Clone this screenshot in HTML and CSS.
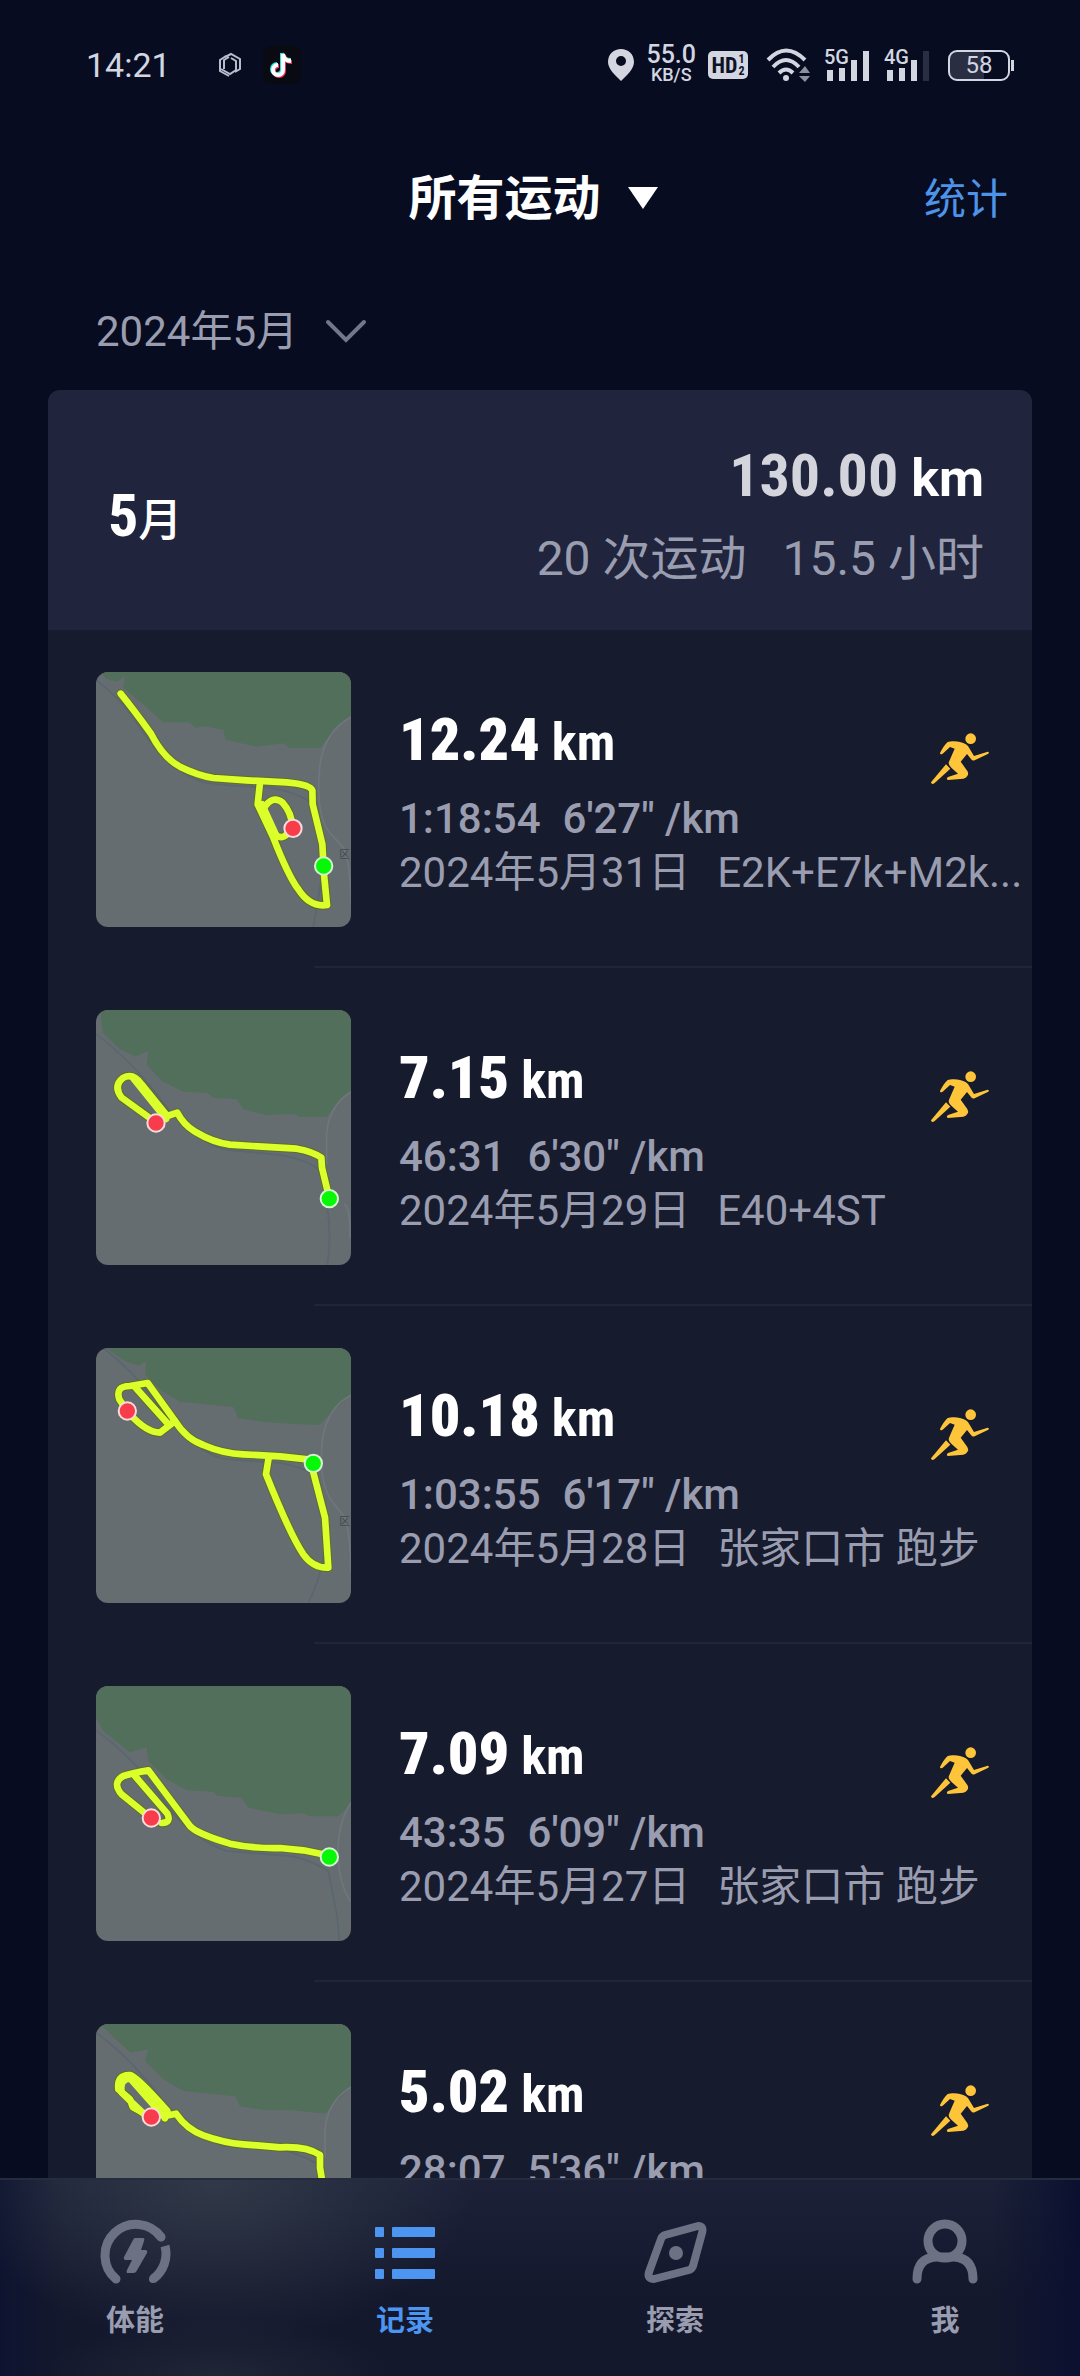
FILE: index.html
```html
<!DOCTYPE html>
<html lang="zh-CN">
<head>
    <meta charset="UTF-8">
    <meta name="viewport" content="width=device-width, initial-scale=1.0">
    <title>运动记录</title>
    <link rel="stylesheet" href="styles.css">
</head>
<body>

<!-- 公用图标 -->
<svg class="defs" width="0" height="0" aria-hidden="true">
    <symbol id="runner" viewBox="30 30 180 156">
        <circle cx="152" cy="47" r="16"/>
        <path d="M60 90 C66 78 74 66 82 58 C92 54 108 54 120 57 C134 60 144 66 148 76 L162 99 L203 86 Q209 87 205 92 L164 112 Q157 114 153 108 L141 93 L122 116 L142 144 Q147 152 142 159 Q138 166 130 167 L84 171 Q77 168 84 162 L114 152 L94 134 Q82 124 88 114 L104 77 L90 72 L68 92 Q60 96 60 90 Z"/>
        <path d="M78 124 L91 137 L44 180 Q35 187 33 178 Z"/>
    </symbol>
</svg>

<!-- 状态栏 -->
<div class="status-bar">
    <span class="clock">14:21</span>
    <svg class="app-hex" width="26" height="26" viewBox="0 0 26 26" fill="none" stroke="#b9bccb" stroke-width="2">
        <path d="M8 5 L14 2 L23 7 V17 L18 20"/>
        <path d="M14 6 L19 9 V18 L13 22 L4 17"/>
        <path d="M12 24 L3 19 V8 L9 4"/>
        <path d="M12 5 L7 8 V17"/>
    </svg>
    <svg class="app-note" width="38" height="38" viewBox="0 0 38 38">
        <rect width="38" height="38" rx="8" fill="#0a0a12"/>
        <path d="M19 7 V23 A5 5 0 1 1 14 18 M19 7 Q20 14 28 14" fill="none" stroke="#25e5df" stroke-width="4"/>
        <path d="M21 9 V25 A5 5 0 1 1 16 20 M21 9 Q22 16 29 16" fill="none" stroke="#f03555" stroke-width="4"/>
        <path d="M20 8 V24 A5 5 0 1 1 15 19 M20 8 Q21 15 28 15" fill="none" stroke="#fff" stroke-width="4"/>
    </svg>

    <div class="status-right">
        <svg width="26" height="34" viewBox="0 0 26 34">
            <path fill="#d3d5e0" fill-rule="evenodd" d="M13 1 C20 1 26 6 26 14 C26 21 19 27 13 33 C7 27 0 21 0 14 C0 6 6 1 13 1 Z M13 8 A5 5 0 1 0 13 18 A5 5 0 1 0 13 8 Z"/>
        </svg>
        <div class="speed"><b>55.0</b><span>KB/S</span></div>
        <div class="hd"><b>HD</b><span><i>1</i><i>2</i></span></div>
        <svg class="wifi" width="46" height="36" viewBox="0 0 46 36">
            <g fill="none" stroke="#d3d5e0" stroke-width="4">
                <path d="M2 13 Q20 -6 39 13"/>
                <path d="M7 20 Q20 6 33 20"/>
                <path d="M13 26 Q20 19 27 26"/>
            </g>
            <circle cx="20" cy="31" r="3" fill="#d3d5e0"/>
            <path d="M33 26 L39 19 L44 26 Z M33 29 L39 35 L44 29 Z" fill="#8d909f"/>
        </svg>
        <svg class="signal" width="48" height="46" viewBox="0 -6 48 46">
            <text x="0" y="16">5G</text>
            <path d="M6 22 V33 M18 20 V33 M30 12 V33 M42 3 V33" stroke="#d3d5e0" stroke-width="6"/>
        </svg>
        <svg class="signal" width="48" height="46" viewBox="0 -6 48 46">
            <text x="0" y="16">4G</text>
            <path d="M6 22 V33 M18 20 V33 M30 12 V33" stroke="#d3d5e0" stroke-width="6"/>
            <path d="M42 3 V33" stroke="#2a2e42" stroke-width="6"/>
        </svg>
        <span class="battery">58</span>
    </div>
</div>

<!-- 标题 -->
<header class="title-bar">
    <label class="picker title-picker">
        <select aria-label="运动类型"><option>所有运动</option></select>
        <svg width="30" height="22" viewBox="0 0 30 22"><path d="M0 0 H30 L15 22 Z" fill="#fff"/></svg>
    </label>
    <a class="stats-link" href="#stats">统计</a>
</header>

<label class="picker month-picker">
    <select aria-label="月份"><option>2024年5月</option></select>
    <svg width="42" height="24" viewBox="0 0 42 24" fill="none" stroke="#73778a" stroke-width="4" stroke-linecap="round">
        <path d="M3 3 L21 21 L39 3"/>
    </svg>
</label>

<main class="card">
    <section class="summary">
        <h2><b>5</b>月</h2>
        <div class="totals">
            <p class="total-distance"><b>130.00</b> km</p>
            <p class="total-count"><span>20 次运动</span><span>15.5 小时</span></p>
        </div>
    </section>

    <ul class="records">
        <li class="record">
            <svg class="map" viewBox="48 63 765 765">
                <path class="forest" d="M60 63 L80 84 L110 92 L135 76 L130 110 L195 165 L250 214 L330 214 L345 230 L375 226 L430 236 L436 266 L530 287 L610 277 L630 291 L720 291 L748 255 L775 222 L813 195 V63 Z"/>
                <path class="road" d="M813 198 Q735 240 720 340 Q705 480 745 540 L790 590 Q812 640 813 760"/>
                <path class="river" d="M48 86 Q130 150 180 230 Q270 370 380 396 Q470 408 560 408 Q660 425 700 460 Q730 560 725 680 L700 828"/>
                <text x="778" y="620" class="place">区</text>
                <g class="route">
                    <path d="M122 128 Q160 175 213 248 Q250 320 300 347 Q350 372 400 381 L500 388 L620 394 Q690 400 697 418 L698 460 L727 580 L732 670 L741 762 Q690 770 655 715 Q625 675 580 560 L533 460 L540 395"/>
                    <path d="M550 475 Q575 430 608 455 Q635 485 638 530 Q610 572 588 552"/>
                </g>
                <g class="route-line">
                    <path d="M122 128 Q160 175 213 248 Q250 320 300 347 Q350 372 400 381 L500 388 L620 394 Q690 400 697 418 L698 460 L727 580 L732 670 L741 762 Q690 770 655 715 Q625 675 580 560 L533 460 L540 395"/>
                    <path d="M550 475 Q575 430 608 455 Q635 485 638 530 Q610 572 588 552"/>
                    <path d="M546 460 L588 552"/>
                </g>
                <circle class="finish" cx="639" cy="532" r="26"/>
                <circle class="start" cx="731" cy="645" r="26"/>
            </svg>
            <div class="info">
                <div class="main-line">
                    <div>
                        <p class="distance"><b>12.24</b> km</p>
                        <p class="pace"><span>1:18:54</span><span>6'27" /km</span></p>
                    </div>
                    <svg class="runner"><use href="#runner"/></svg>
                </div>
                <p class="note"><span>2024年5月31日</span><span class="name">E2K+E7k+M2k...</span></p>
            </div>
        </li>

        <li class="record">
            <svg class="map" viewBox="48 57 765 765">
                <path class="forest" d="M60 57 L68 125 L120 175 L165 196 L205 180 L200 220 L245 270 L310 302 L380 305 L400 320 L470 325 L490 355 L560 372 L640 368 L660 378 L740 378 L770 340 L813 302 V57 Z"/>
                <path class="road" d="M813 302 Q745 345 740 430 V520 M795 640 Q812 660 810 740"/>
                <path class="river" d="M48 130 Q140 195 230 310 Q320 440 430 475 L600 492 Q680 505 725 540 L742 650 Q755 740 742 822"/>
                <g class="route">
                    <path d="M215 385 L125 320 Q98 285 130 260 Q160 245 185 280 L262 375 L292 365 Q310 400 345 422 Q400 455 450 461 L650 473 Q700 482 724 500 L726 530 L745 610"/>
                </g>
                <g class="route-line">
                    <path d="M215 385 L125 320 Q98 285 130 260 Q160 245 185 280 L262 375 L292 365 Q310 400 345 422 Q400 455 450 461 L650 473 Q700 482 724 500 L726 530 L745 610"/>
                    <path d="M160 262 L258 384"/>
                </g>
                <circle class="finish" cx="228" cy="396" r="26"/>
                <circle class="start" cx="748" cy="623" r="26"/>
            </svg>
            <div class="info">
                <div class="main-line">
                    <div>
                        <p class="distance"><b>7.15</b> km</p>
                        <p class="pace"><span>46:31</span><span>6'30" /km</span></p>
                    </div>
                    <svg class="runner"><use href="#runner"/></svg>
                </div>
                <p class="note"><span>2024年5月29日</span><span class="name">E40+4ST</span></p>
            </div>
        </li>

        <li class="record">
            <svg class="map" viewBox="48 51 765 765">
                <path class="forest" d="M80 51 L130 88 L175 104 L200 90 L195 130 L245 180 L300 212 L460 228 L475 262 L560 274 L660 280 L718 282 L750 250 L813 193 V51 Z"/>
                <path class="road" d="M813 193 Q740 230 727 330 Q715 450 755 510 L795 560 Q812 620 812 720"/>
                <path class="river" d="M70 51 Q160 120 230 215 Q320 350 430 384 L600 396 Q680 410 710 440 L735 600 Q740 700 688 810"/>
                <text x="778" y="582" class="place">区</text>
                <g class="route">
                    <path d="M142 240 L118 205 Q105 165 150 165 L203 156 L285 270 Q320 325 370 342 Q430 368 490 370 L600 376 L690 386 L735 560 L745 710 Q700 712 670 670 Q630 610 558 430 L566 380"/>
                    <path d="M150 250 Q200 305 240 305 L285 270 M165 168 L265 280"/>
                </g>
                <g class="route-line">
                    <path d="M142 240 L118 205 Q105 165 150 165 L203 156 L285 270 Q320 325 370 342 Q430 368 490 370 L600 376 L690 386 L735 560 L745 710 Q700 712 670 670 Q630 610 558 430 L566 380"/>
                    <path d="M150 250 Q200 305 240 305 L285 270 M165 168 L265 280"/>
                </g>
                <circle class="finish" cx="142" cy="240" r="26"/>
                <circle class="start" cx="700" cy="397" r="26"/>
            </svg>
            <div class="info">
                <div class="main-line">
                    <div>
                        <p class="distance"><b>10.18</b> km</p>
                        <p class="pace"><span>1:03:55</span><span>6'17" /km</span></p>
                    </div>
                    <svg class="runner"><use href="#runner"/></svg>
                </div>
                <p class="note"><span>2024年5月28日</span><span class="name">张家口市 跑步</span></p>
            </div>
        </li>

        <li class="record">
            <svg class="map" viewBox="48 45 765 765">
                <path class="forest" d="M48 45 V140 L70 180 L150 244 L200 228 L205 270 L260 325 L320 358 L400 362 L410 374 L485 380 L505 410 L600 430 L670 426 L690 436 L775 436 L813 400 V45 Z"/>
                <path class="road" d="M813 395 Q770 460 775 560 Q775 630 810 690"/>
                <path class="river" d="M48 178 Q150 250 230 360 Q320 500 440 540 L640 556 Q710 575 745 600 L772 740 L778 810"/>
                <g class="route">
                    <path d="M205 435 L125 370 Q95 335 130 315 Q160 305 205 298 L330 465 Q350 488 450 518 Q520 533 600 531 L670 538 L740 552"/>
                    <path d="M165 315 L262 428 Q275 455 245 456"/>
                </g>
                <g class="route-line">
                    <path d="M205 435 L125 370 Q95 335 130 315 Q160 305 205 298 L330 465 Q350 488 450 518 Q520 533 600 531 L670 538 L740 552"/>
                    <path d="M165 315 L262 428 Q275 455 245 456"/>
                </g>
                <circle class="finish" cx="214" cy="441" r="26"/>
                <circle class="start" cx="748" cy="558" r="26"/>
            </svg>
            <div class="info">
                <div class="main-line">
                    <div>
                        <p class="distance"><b>7.09</b> km</p>
                        <p class="pace"><span>43:35</span><span>6'09" /km</span></p>
                    </div>
                    <svg class="runner"><use href="#runner"/></svg>
                </div>
                <p class="note"><span>2024年5月27日</span><span class="name">张家口市 跑步</span></p>
            </div>
        </li>

        <li class="record">
            <svg class="map" viewBox="48 69 765 765">
                <path class="forest" d="M60 69 L150 155 L205 145 L195 180 L250 235 L310 270 L465 286 L480 316 L560 328 L640 328 L735 338 L770 300 L813 258 V69 Z"/>
                <path class="road" d="M813 258 Q735 305 735 400 V470"/>
                <path class="river" d="M48 95 Q140 160 230 275 Q320 400 430 434 L620 450 Q690 470 725 500"/>
                <g class="route">
                    <path d="M215 350 L158 318 L150 295 L115 265 Q110 220 150 222 Q170 225 262 330 L255 352 M255 345 L288 338 Q320 385 370 403 Q430 425 490 430 L600 439 Q680 435 720 462 L720 500 L730 560"/>
                </g>
                <g class="route-line">
                    <path d="M215 350 L158 318 L150 295 L115 265 Q110 220 150 222 Q170 225 262 330 L255 352 M255 345 L288 338 Q320 385 370 403 Q430 425 490 430 L600 439 Q680 435 720 462 L720 500 L730 560"/>
                    <path d="M195 342 L125 275 Q118 235 150 232 L250 345"/>
                </g>
                <circle class="finish" cx="214" cy="348" r="26"/>
            </svg>
            <div class="info">
                <div class="main-line">
                    <div>
                        <p class="distance"><b>5.02</b> km</p>
                        <p class="pace"><span>28:07</span><span>5'36" /km</span></p>
                    </div>
                    <svg class="runner"><use href="#runner"/></svg>
                </div>
                <p class="note"></p>
            </div>
        </li>
    </ul>
</main>

<!-- 底部导航 -->
<nav class="tab-bar">
    <a class="tab" href="#fitness">
        <svg width="74" height="68" viewBox="0 0 74 68">
            <g fill="none" stroke="#6d7184" stroke-width="9">
                <path d="M18 61 A31 31 0 1 1 63 19" stroke-linecap="round"/>
                <path d="M55 61 A31 31 0 0 0 67 28"/>
            </g>
            <circle cx="55" cy="61" r="4" fill="#6d7184"/>
            <path fill="#6d7184" d="M37 20 H45 Q47 20 46 23 L43 32 H48 Q50 33 49 35 L38 54 Q37 55 35 55 H29 Q28 54 29 52 L34 42 H27 Q25 41 26 39 L35 22 Q36 20 37 20 Z"/>
        </svg>
        <span>体能</span>
    </a>
    <a class="tab active" href="#records" aria-current="page">
        <svg width="74" height="68" viewBox="0 0 74 68" fill="#4c96f2">
            <rect x="7" y="9" width="9" height="10" rx="1"/><rect x="24" y="9" width="43" height="10" rx="1"/>
            <rect x="7" y="30" width="9" height="10" rx="1"/><rect x="24" y="30" width="43" height="10" rx="1"/>
            <rect x="7" y="51" width="9" height="10" rx="1"/><rect x="24" y="51" width="43" height="10" rx="1"/>
        </svg>
        <span>记录</span>
    </a>
    <a class="tab" href="#explore">
        <svg width="74" height="68" viewBox="0 0 74 68">
            <path d="M23 21 Q24 18 27 17 L60 8 Q66 8 64 15 L55 48 Q54 51 51 52 L16 61 Q9 61 11 54 Z" fill="none" stroke="#6d7184" stroke-width="8" stroke-linejoin="round"/>
            <circle cx="38" cy="35" r="7" fill="#6d7184"/>
        </svg>
        <span>探索</span>
    </a>
    <a class="tab" href="#me">
        <svg width="74" height="68" viewBox="0 0 74 68" fill="none" stroke="#6d7184" stroke-width="9" stroke-linecap="round">
            <ellipse cx="37" cy="23" rx="17" ry="17"/>
            <path d="M9 61 Q9 40 28 39 H46 Q65 40 65 61"/>
        </svg>
        <span>我</span>
    </a>
</nav>

</body>
</html>
```
FILE: styles.css
```css
* {
    box-sizing: border-box;
}

body {
    margin: 0;
    height: 100vh;
    overflow: hidden;
    display: flex;
    flex-direction: column;
    background-color: #070c20;
    color: #fff;
    font-family: Roboto, "Noto Sans CJK SC", sans-serif;
}

h2, p, ul {
    margin: 0;
    padding: 0;
}

a {
    text-decoration: none;
}

.defs {
    position: absolute;
}

/* 状态栏 */
.status-bar {
    flex: none;
    display: flex;
    align-items: center;
    height: 130px;
    padding: 0 70px 0 86px;
    color: #d3d5e0;
}

.clock {
    font-size: 34px;
}

.app-hex {
    margin-left: 46px;
}

.app-note {
    margin-left: 20px;
}

.status-right {
    display: flex;
    align-items: center;
    margin-left: auto;
}

.speed {
    display: flex;
    flex-direction: column;
    align-items: center;
    margin: 0 12px;
    line-height: 20px;
    font-size: 18px;
    font-weight: 500;
}

.speed b {
    font-size: 25px;
    font-weight: 500;
}

.hd {
    display: flex;
    align-items: center;
    justify-content: center;
    gap: 1px;
    width: 40px;
    height: 28px;
    border-radius: 5px;
    background-color: #d3d5e0;
    color: #0d1226;
    font-family: "Roboto Condensed", Roboto, sans-serif;
    font-size: 22px;
}

.hd span {
    display: grid;
    font-size: 12px;
    font-weight: 700;
    line-height: 12px;
}

.hd i {
    font-style: normal;
}

.wifi {
    margin-left: 18px;
}

.signal {
    margin-left: 12px;
}

.signal text {
    fill: #d3d5e0;
    font-size: 20px;
    font-weight: 500;
}

.battery {
    position: relative;
    width: 62px;
    margin-left: 16px;
    border: 2px solid #d3d5e0;
    border-radius: 9px;
    background: linear-gradient(to right, #2a2e42 58%, transparent 58%);
    font-size: 24px;
    line-height: 27px;
    text-align: center;
}

.battery::after {
    content: "";
    position: absolute;
    right: -6px;
    top: 8px;
    width: 3px;
    height: 11px;
    background-color: #d3d5e0;
}

/* 标题栏 */
.title-bar {
    flex: none;
    display: grid;
    grid-template-columns: 1fr auto 1fr;
    align-items: center;
    height: 136px;
    padding: 0 72px 0 58px;
}

.picker {
    display: flex;
    align-items: center;
}

.picker select {
    appearance: none;
    border: none;
    padding: 0;
    background: none;
    color: inherit;
    font: inherit;
}

.title-picker {
    grid-column: 2;
    gap: 26px;
    font-size: 48px;
    font-weight: 700;
}

.stats-link {
    justify-self: end;
    padding-bottom: 6px;
    font-size: 42px;
    color: #4d94e8;
}

.month-picker {
    flex: none;
    height: 124px;
    gap: 26px;
    padding: 6px 96px 0;
    font-size: 42px;
    color: #9a9daf;
}

/* 月份卡片 */
.card {
    flex: 1;
    min-height: 0;
    overflow: hidden;
    margin: 0 48px;
    border-radius: 12px 12px 0 0;
    background-color: #171b2e;
}

.summary {
    display: flex;
    justify-content: space-between;
    align-items: center;
    height: 240px;
    padding: 14px 48px 0 60px;
    background-color: #20253d;
}

.summary h2 {
    font-size: 44px;
    font-weight: 500;
}

.summary h2 b,
.total-distance b,
.distance {
    font-family: "Roboto Condensed", Roboto, sans-serif;
    font-weight: 700;
}

.summary h2 b,
.total-distance b,
.distance b {
    font-size: 60px;
    line-height: 1;
}

.totals {
    text-align: right;
    line-height: 80px;
}

.total-distance {
    padding-top: 4px;
    font-size: 52px;
    font-weight: 700;
}

.total-distance b {
    color: #d4d5dc;
}

.total-count {
    font-size: 48px;
    color: #9a9daf;
}

.total-count span + span {
    margin-left: 36px;
}

/* 运动列表 */
.records {
    list-style: none;
}

.record {
    display: flex;
    align-items: center;
    gap: 48px;
    height: 338px;
    padding: 0 8px 0 48px;
    background: linear-gradient(#21253a, #21253a) 266px 100% / 100% 2px no-repeat;
}

.map {
    flex: none;
    width: 255px;
    height: 255px;
    border-radius: 12px;
    background-color: #656d70;
}

.forest {
    fill: #526f5b;
}

.road,
.river,
.route path,
.route-line path {
    fill: none;
    stroke-linejoin: round;
    stroke-linecap: round;
}

.road {
    stroke: #70767d;
    stroke-width: 5;
}

.river {
    stroke: #5a6670;
    stroke-width: 5;
}

.route path {
    stroke: #5f6e2c;
    stroke-width: 26;
}

.route-line path {
    stroke: #dbff2b;
    stroke-width: 20;
}

.start,
.finish {
    stroke-width: 6;
}

.start {
    fill: #06f806;
    stroke: #d5f5d0;
}

.finish {
    fill: #f93c4b;
    stroke: #f8dcdc;
}

.place {
    font-size: 32px;
    fill: #41484f;
}

.info {
    flex: 1;
    min-width: 0;
    color: #9a9daf;
}

.main-line {
    display: flex;
    justify-content: space-between;
    align-items: center;
}

.distance {
    color: #fff;
    font-size: 52px;
    line-height: 90px;
}

.pace {
    margin-top: 4px;
    font-size: 42px;
    font-weight: 500;
    line-height: 54px;
}

.pace span + span {
    margin-left: 22px;
}

.runner {
    width: 60px;
    height: 52px;
    margin: 0 34px 26px 0;
    fill: #ffc53a;
}

.note {
    display: flex;
    gap: 27px;
    min-height: 54px;
    font-size: 42px;
    line-height: 54px;
    white-space: nowrap;
}

.name {
    overflow: hidden;
    text-overflow: ellipsis;
}

/* 底部导航 */
.tab-bar {
    flex: none;
    display: grid;
    grid-template-columns: repeat(4, 1fr);
    height: 198px;
    border-top: 2px solid #262b40;
    background:
        radial-gradient(ellipse 24% 85% at 20% 0, rgba(64, 74, 84, 0.6), transparent),
        radial-gradient(ellipse 16% 30% at 20% 100%, rgba(48, 60, 68, 0.4), transparent),
        linear-gradient(to right, #0e1430, transparent 6%, transparent 92%, #0b1030),
        linear-gradient(#1c2138, #14182d 60%, #14182d);
}

.tab {
    display: flex;
    flex-direction: column;
    align-items: center;
    gap: 15px;
    padding-top: 38px;
    font-size: 29px;
    font-weight: 700;
    line-height: 40px;
    color: #9a9daf;
}

.tab.active {
    color: #4c96f2;
}
```
